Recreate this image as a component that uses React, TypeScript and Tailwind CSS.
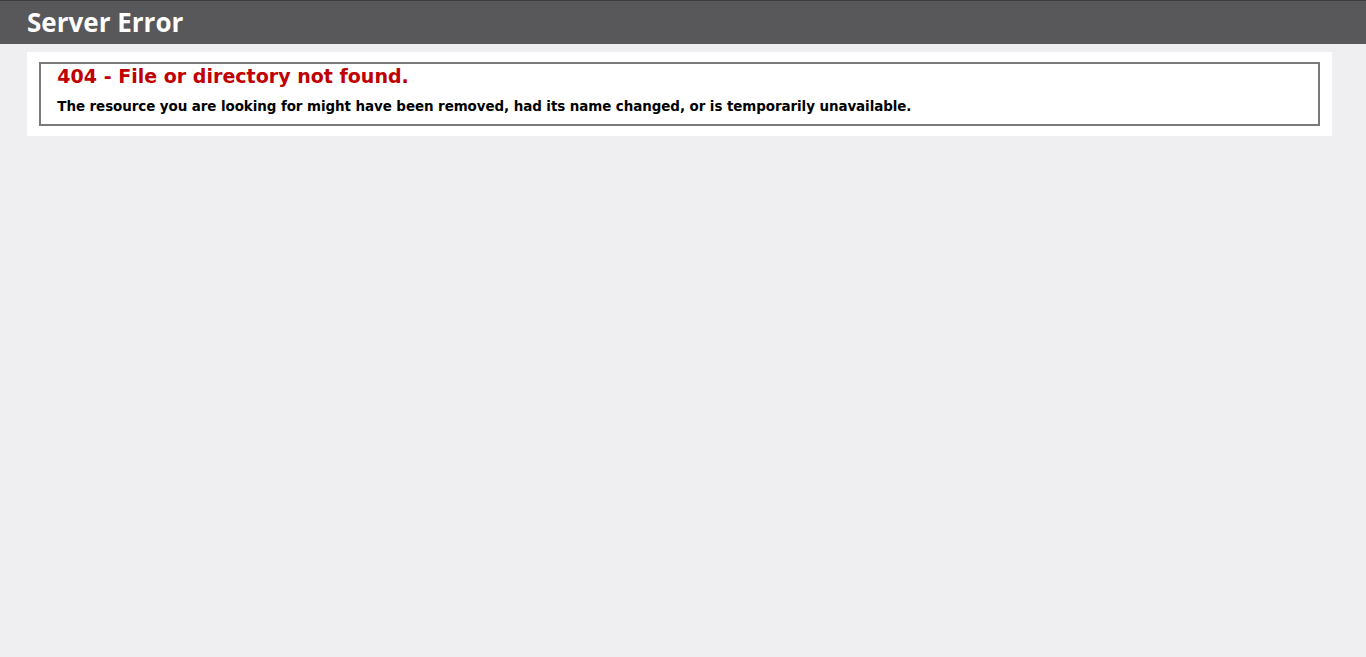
export default function App() {
  return (
    <div className="min-h-[657px] bg-[#efeef0] text-[11.2px] font-['Verdana','DejaVu_Sans',sans-serif]">
      {/* Header */}
      <div className="h-[44px] w-full border-t border-[#3c3c3c] bg-[#58585a] px-[27px] pt-[5px]">
        <h1 className="m-0 text-[26px] leading-[32px] font-bold text-white font-['Open_Sans',sans-serif]">
          Server Error
        </h1>
      </div>

      {/* Content */}
      <div className="ml-[2%]">
        <div className="mt-[8px] w-[calc(96%+20px)] bg-white p-[10px]">
          <div className="mx-[2px] border-2 border-[#7a7a7a] pl-[16px] pr-[15px] pb-[9px]">
            <h2 className="m-0 pt-[1px] text-[19.04px] leading-[23px] font-bold text-[#c00000]">
              404 - File or directory not found.
            </h2>
            <h3 className="mt-[10px] text-[13.44px] leading-[17px] font-bold tracking-[-0.07px] text-black">
              The resource you are looking for might have been removed, had its name changed, or is temporarily
              unavailable.
            </h3>
          </div>
        </div>
      </div>
    </div>
  );
}
